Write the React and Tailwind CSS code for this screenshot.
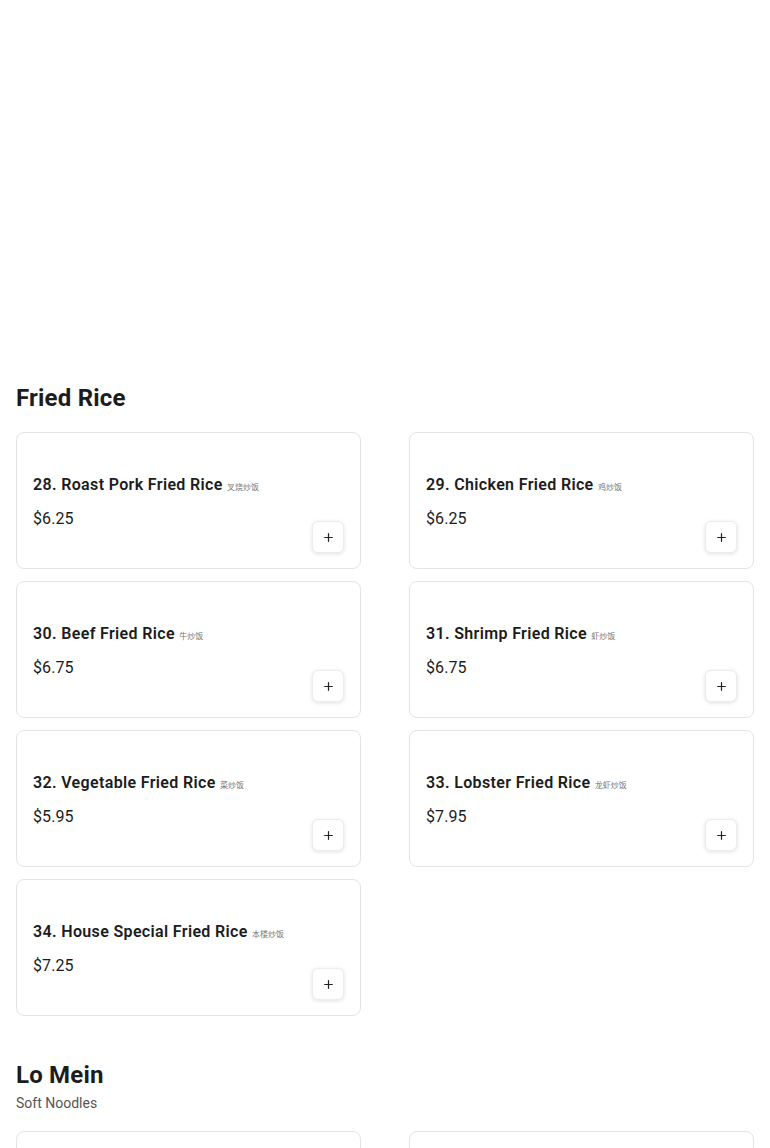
import React from 'react';
import { Plus } from 'lucide-react';

const SECTIONS = [
  {
    title: 'Fried Rice',
    items: [
      { name: '28. Roast Pork Fried Rice', zh: '叉烧炒饭', price: '$6.25' },
      { name: '29. Chicken Fried Rice', zh: '鸡炒饭', price: '$6.25' },
      { name: '30. Beef Fried Rice', zh: '牛炒饭', price: '$6.75' },
      { name: '31. Shrimp Fried Rice', zh: '虾炒饭', price: '$6.75' },
      { name: '32. Vegetable Fried Rice', zh: '菜炒饭', price: '$5.95' },
      { name: '33. Lobster Fried Rice', zh: '龙虾炒饭', price: '$7.95' },
      { name: '34. House Special Fried Rice', zh: '本楼炒饭', price: '$7.25' },
    ],
  },
  {
    title: 'Lo Mein',
    sub: 'Soft Noodles',
    items: [
      { name: '35. Roast Pork Lo Mein', zh: '叉烧捞面', price: '$6.25' },
      { name: '36. Chicken Lo Mein', zh: '鸡捞面', price: '$6.25' },
    ],
  },
];

const MenuCard = ({ item }) => (
  <div className="rounded-lg border border-[#e4e4e4] bg-white px-4 pt-[40px] pb-[15px]">
    <p className="h-6 text-[16px] leading-6 font-semibold tracking-[0.35px] text-[#1c1c1c]">
      {item.name}{' '}
      <span className="text-[8px] leading-none font-normal tracking-normal text-[#777]" style={{ fontFamily: '"Noto Sans CJK SC", sans-serif' }}>{item.zh}</span>
    </p>
    <p className="mt-[10px] h-6 text-[16px] leading-6 tracking-[0.1px] text-[#1c1c1c]">{item.price}</p>
    <div className="flex justify-end -mt-[10px]">
      <button className="flex h-8 w-8 items-center justify-center rounded-md border border-[#ececec] bg-white shadow-[0_1px_4px_rgba(0,0,0,0.12)]">
        <Plus size={13} strokeWidth={2.25} className="text-[#222]" />
      </button>
    </div>
  </div>
);

export default function App() {
  return (
    <div className="min-h-screen bg-white" style={{ fontFamily: 'Roboto, "Noto Sans CJK SC", sans-serif' }}>
      {/* empty hero area */}
      <div className="h-[350px]" />
      <div className="px-4 pt-8">
        {SECTIONS.map((section, i) => (
          <section key={section.title} className={i > 0 ? 'mt-[43px]' : ''}>
            <div className="mb-[18px]">
              <h2 className="text-2xl leading-8 font-bold tracking-[0.2px] text-[#1c1c1c]">{section.title}</h2>
              {section.sub && <p className="mt-0.5 text-sm leading-5 text-[#555]">{section.sub}</p>}
            </div>
            <div className="grid grid-cols-2 gap-x-12 gap-y-3">
              {section.items.map((item) => (
                <MenuCard key={item.name} item={item} />
              ))}
            </div>
          </section>
        ))}
      </div>
    </div>
  );
}
